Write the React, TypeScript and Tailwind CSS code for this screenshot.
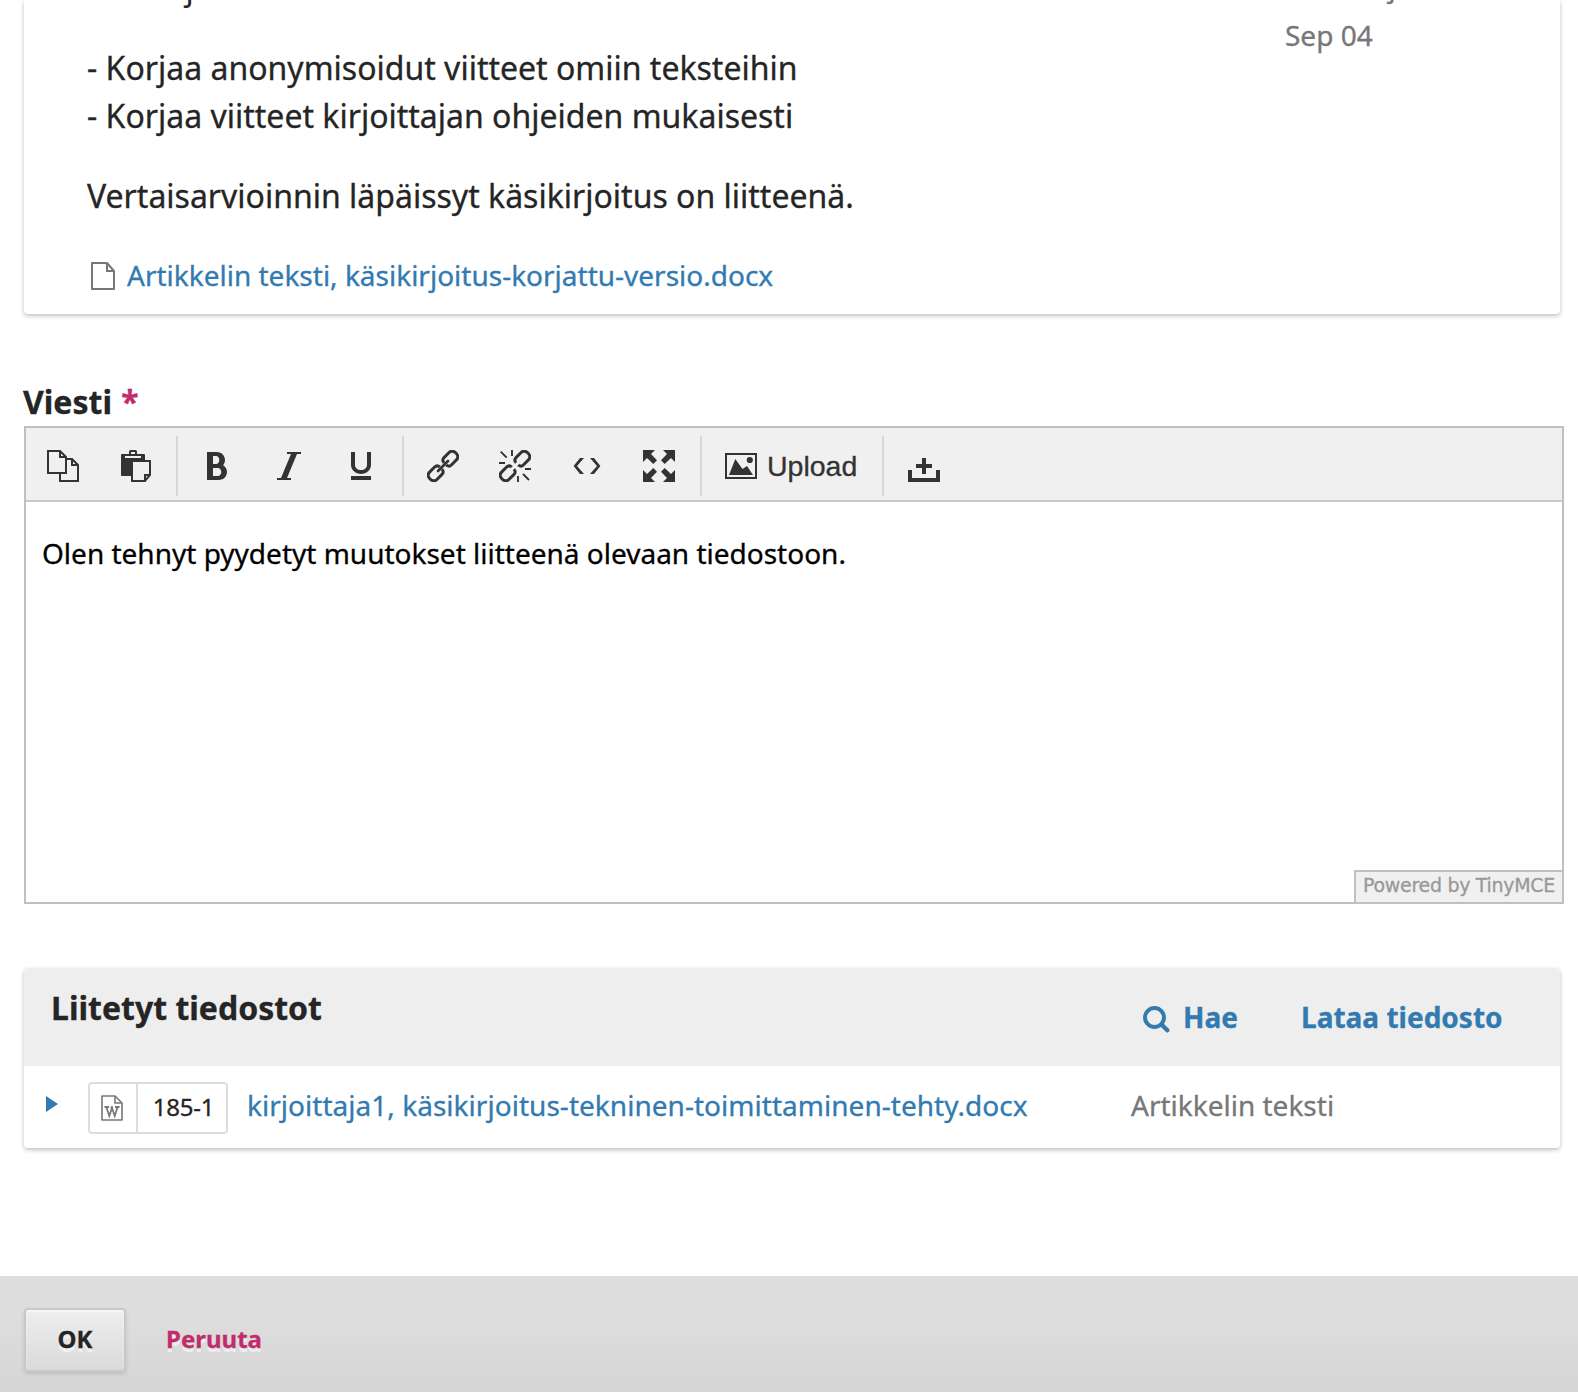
import type { ReactNode } from "react";
import { ImBold, ImItalic, ImUnderline } from "react-icons/im";

function CopyIcon() {
  return (
    <svg className="size-8" viewBox="0 0 16 16" fill="none" stroke="#333" strokeWidth="1">
      <path d="M9.5 4.5H12.5L15.5 7.5V15.5H6.5V12" />
      <path d="M12.5 4.5V7.5H15.5" />
      <path d="M.5 .5H6.5L9.5 3.5V11.5H.5Z" />
      <path d="M6.5 .5V3.5H9.5" />
    </svg>
  );
}

function PasteIcon() {
  return (
    <svg className="size-8" viewBox="0 0 32 32">
      <path d="M2 4H9V1.5Q9 0 10.500 0H15.500Q17 0 17 1.500V4H24Q25 4 25 5V26H2Q1 26 1 25V5Q1 4 2 4Z" fill="#333" />
      <path d="M11 2H15V4H11ZM5 6H21V8H5Z" fill="#f0f0f0" />
      <path d="M12 11H30V25L25 31H12Z" fill="#f0f0f0" stroke="#333" strokeWidth="2" />
      <path d="M25 31V25H30" fill="none" stroke="#333" strokeWidth="2" />
    </svg>
  );
}

const chainHalf = "M-7.500 -1.500V-2.200Q-7 -5.200 -4 -5.200H3.200Q5.500 -5.200 6.700 -3.600Q7.700 -2.200 7.700 0T6.700 3.600Q5.500 5.200 3.200 5.200H-4Q-7 5.200 -7.500 2.200V1.500";

function LinkIcon() {
  return (
    <svg className="size-8" viewBox="0 0 32 32" fill="none" stroke="#333" strokeWidth="3">
      <path transform="translate(23.500 8.500) rotate(-45)" d={chainHalf} />
      <path transform="translate(8.500 23.500) rotate(135)" d={chainHalf} />
      <path d="M11 21L21 11" strokeWidth="2.600" strokeLinecap="round" />
    </svg>
  );
}

function UnlinkIcon() {
  return (
    <svg className="size-8" viewBox="0 0 32 32" fill="none" stroke="#333" strokeWidth="3">
      <path transform="translate(23.500 8.500) rotate(-45)" d={chainHalf} />
      <path transform="translate(8.500 23.500) rotate(135)" d={chainHalf} />
      <path strokeWidth="1.900" d="M1.700 1.700L7.700 7.700M13 0V6M0 13H6M26 19H32M19 26V32M24 24L30 30" />
    </svg>
  );
}

function CodeIcon() {
  return (
    <svg className="size-8" viewBox="0 0 32 32" fill="#333">
      <path d="M13 8L6 16L13 24H9L2.600 16L9 8ZM19 8L26 16L19 24H23L29.400 16L23 8Z" />
    </svg>
  );
}

function FullscreenIcon() {
  return (
    <svg className="size-8" viewBox="0 0 32 32" fill="#333">
      <path d="M0 0H12L8 4L14 10.300L10.300 14L4 8L0 12Z" />
      <path d="M32 0H20L24 4L18 10.300L21.700 14L28 8L32 12Z" />
      <path d="M0 32H12L8 28L14 21.700L10.300 18L4 24L0 20Z" />
      <path d="M32 32H20L24 28L18 21.700L21.700 18L28 24L32 20Z" />
    </svg>
  );
}

function ImageIcon() {
  return (
    <svg className="h-[26px] w-8" viewBox="0 0 32 26" fill="#333">
      <rect x="1" y="1" width="30" height="24" fill="none" stroke="#333" strokeWidth="2" />
      <path d="M4 22L10.300 6L17.500 16L22 13L28 22Z" />
      <circle cx="24.800" cy="7" r="3.100" />
    </svg>
  );
}

function TrayIcon() {
  return (
    <svg className="h-6 w-8" viewBox="0 0 32 24" fill="#333">
      <path d="M0 12H4V20H28V12H32V24H0Z" />
      <path d="M14 0H18V6H24V10H18V16H14V10H8V6H14Z" />
    </svg>
  );
}

function WordFileIcon() {
  return (
    <svg className="mr-[2px] h-[26px] w-[22px]" viewBox="0 0 22 26" fill="none" stroke="#777" strokeWidth="1.600">
      <path d="M1 1H14L21 8V25H1Z" strokeLinejoin="round" />
      <path d="M14 1V8H21" />
      <path d="M5.500 12.500L8.300 21L11 13L13.700 21L16.500 12.500M3.500 12H8M9.500 12.500H12M14 12H18.500" strokeWidth="1.800" />
    </svg>
  );
}

function Tool({ label, className, children }: { label: string; className: string; children: ReactNode }) {
  return (
    <button type="button" aria-label={label} className={`flex shrink-0 items-center text-[#333] ${className}`}>
      {children}
    </button>
  );
}

function Separator({ className }: { className: string }) {
  return <span className={`h-[60px] w-[2px] shrink-0 bg-[#d6d6d6] ${className}`} />;
}

export default function App() {
  return (
    <div className="flex h-[1392px] w-[1578px] flex-col overflow-hidden bg-white font-['Noto_Sans','Open_Sans',sans-serif] whitespace-nowrap text-[#252525] [-webkit-text-stroke:0.3px]">
      <section className="ml-6 flex h-[314px] w-[1536px] shrink-0 rounded-b-[4px] pl-[63px] shadow-[0_2px_4px_rgba(0,0,0,0.25)]">
        <div className="-mt-[36px] w-[1198px] text-[32px] leading-[48px]">
          <p className="[-webkit-text-stroke:0]">Tee kirjoitukseen tarvitaan seuraavat muutokset</p>
          <p className="mt-8">
            - Korjaa anonymisoidut viitteet omiin teksteihin
            <br />- Korjaa viitteet kirjoittajan ohjeiden mukaisesti
          </p>
          <p className="mt-8">Vertaisarvioinnin läpäissyt käsikirjoitus on liitteenä.</p>
          <a className="mt-[35px] flex items-start text-[28px] leading-[40px] text-[#327ab0]">
            <svg className="mt-[7px] mr-[12px] ml-[4px] h-[28px] w-6" viewBox="0 0 24 28" fill="none" stroke="#777" strokeWidth="2">
              <path d="M1 1H16L23 9V27H1Z" strokeLinejoin="round" />
              <path d="M16 1V9H23" />
            </svg>
            Artikkelin teksti, käsikirjoitus-korjattu-versio.docx
          </a>
        </div>
        <div className="-mt-[38px] text-[28px] leading-[49px] text-[#777]">
          <p>toimittaja</p>
          <p>Sep 04</p>
        </div>
      </section>

      <label className="mt-[65px] ml-[23px] h-[47px] shrink-0 text-[32px] leading-[46px] font-bold">
        Viesti <span className="ml-px text-[#c12d6c]">*</span>
      </label>

      <section className="ml-6 flex h-[478px] w-[1540px] shrink-0 flex-col border-2 border-[#c0c0c0]">
        <div className="flex h-[74px] shrink-0 items-center border-b-2 border-[#c8c8c8] bg-[#f0f0f0] pt-[4px]">
          <Tool label="Copy" className="ml-[21px]"><CopyIcon /></Tool>
          <Tool label="Paste" className="ml-[41px]"><PasteIcon /></Tool>
          <Separator className="ml-6" />
          <Tool label="Bold" className="ml-[23px]"><ImBold className="size-8" /></Tool>
          <Tool label="Italic" className="ml-10"><ImItalic className="size-8" /></Tool>
          <Tool label="Underline" className="ml-10"><ImUnderline className="size-8" /></Tool>
          <Separator className="ml-[25px]" />
          <Tool label="Link" className="ml-[23px]"><LinkIcon /></Tool>
          <Tool label="Unlink" className="ml-10"><UnlinkIcon /></Tool>
          <Tool label="Code" className="ml-10"><CodeIcon /></Tool>
          <Tool label="Fullscreen" className="ml-10"><FullscreenIcon /></Tool>
          <Separator className="ml-[25px]" />
          <Tool label="Upload" className="ml-[23px] w-[157px] gap-[10px] font-['Liberation_Sans',Arial,sans-serif] text-[28.5px] leading-8">
            <ImageIcon />Upload
          </Tool>
          <Separator className="" />
          <Tool label="Insert" className="ml-6 pt-[8px]"><TrayIcon /></Tool>
        </div>
        <p className="mt-[31px] ml-4 text-[28px] leading-[40px] text-black">Olen tehnyt pyydetyt muutokset liitteenä olevaan tiedostoon.</p>
        <div className="mt-auto ml-auto flex h-8 w-[208px] items-center justify-center border-t-2 border-l-2 border-[#c0c0c0] bg-[#f0f0f0] pb-[3px] font-['DejaVu_Sans',sans-serif] text-[19px] leading-none tracking-[-0.3px] text-[#999]">
          Powered by TinyMCE
        </div>
      </section>

      <section className="mt-16 ml-6 h-[180px] w-[1536px] shrink-0 rounded-[4px] shadow-[0_2px_4px_rgba(0,0,0,0.25)]">
        <header className="flex h-[98px] items-start rounded-t-[4px] bg-[#eee] pl-[27px] font-bold">
          <h2 className="mt-[17px] w-[1092px] text-[32px] leading-[46px]">Liitetyt tiedostot</h2>
          <a className="mt-[29px] flex w-[158px] items-start text-[28px] leading-[40px] text-[#327ab0]">
            <svg className="mt-[9px] mr-[13px] size-[27px]" viewBox="0 0 27 27" fill="none" stroke="currentColor">
              <circle cx="11.500" cy="11.500" r="9.500" strokeWidth="3.900" />
              <path d="M18.500 18.500L24.300 24.300" strokeWidth="4.400" strokeLinecap="round" />
            </svg>
            Hae
          </a>
          <a className="mt-[29px] text-[28px] leading-[40px] text-[#327ab0]">Lataa tiedosto</a>
        </header>
        <div className="flex h-[82px] items-start rounded-b-[4px] bg-white pl-[22px]">
          <svg className="mt-[30px] h-4 w-3" viewBox="0 0 12 16" fill="#327ab0"><path d="M0 0L12 8L0 16Z" /></svg>
          <div className="mt-4 ml-[30px] flex h-[52px] w-[140px] rounded-[4px] border-2 border-[#ddd]">
            <span className="flex w-[48px] items-center justify-center border-r-2 border-[#ddd]"><WordFileIcon /></span>
            <span className="flex-1 pl-[3px] text-center text-[24px] leading-[46px] tracking-[-0.2px]">185-1</span>
          </div>
          <a className="mt-[19px] ml-[19px] w-[884px] text-[28px] leading-[40px] tracking-[0.03px] text-[#327ab0]">
            kirjoittaja1, käsikirjoitus-tekninen-toimittaminen-tehty.docx
          </a>
          <span className="mt-[19px] text-[28px] leading-[40px] text-[#777]">Artikkelin teksti</span>
        </div>
      </section>

      <footer className="mt-auto flex h-[116px] shrink-0 items-start bg-linear-to-b from-[#ddd] from-40% to-[#d5d5d5] pt-8 pl-6 text-[24px] font-bold">
        <button type="button" className="h-16 w-[102px] rounded-[4px] border-2 border-[#c8c8c8] bg-linear-to-b from-[#eee] to-[#dadada] pb-[2px] text-center leading-[58px] shadow-[0_2px_4px_rgba(0,0,0,0.12),inset_0_2px_2px_rgba(255,255,255,0.6)] [text-shadow:0_4px_0_#f0f0f0]">
          OK
        </button>
        <a className="mt-px ml-10 leading-[60px] text-[#c12d6c] [text-shadow:0_4px_0_#eee]">Peruuta</a>
      </footer>
    </div>
  );
}
